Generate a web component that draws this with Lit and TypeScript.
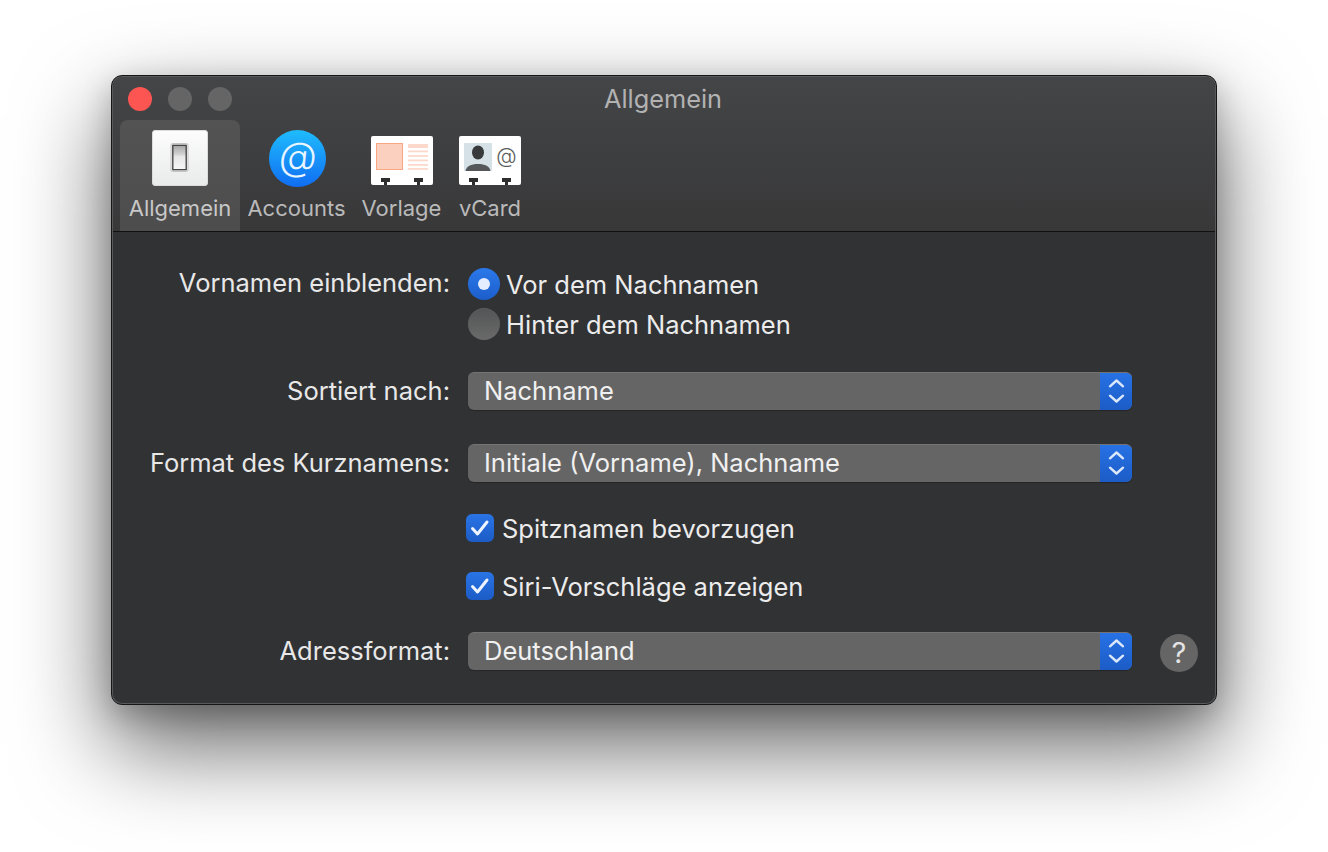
import { LitElement, html, css, svg } from "lit";
import { customElement } from "lit/decorators.js";

const chevrons = html`<svg class="chev" width="32" height="38" viewBox="0 0 32 38" fill="none" stroke="#dbe7fb" stroke-width="2.4" stroke-linecap="round" stroke-linejoin="round"><path d="M10 14.300 16.500 8.500 23 14.300"/><path d="M10 23.700 16.500 29.500 23 23.700"/></svg>`;

const pegs = svg`<path d="M10 42h9v4h-3v3h-3v-3h-3z M43 42h9v4h-3v3h-3v-3h-3z" fill="#2e2e2e"/>`;

const switchIcon = html`<svg width="56" height="56" viewBox="0 0 56 56">
  <defs>
    <linearGradient id="plate" x1="0" y1="0" x2="0" y2="1"><stop offset="0" stop-color="#fdfdfe"/><stop offset="1" stop-color="#e9eaea"/></linearGradient>
    <linearGradient id="rock" x1="0" y1="0" x2="0" y2="1"><stop offset="0" stop-color="#a5a5a5"/><stop offset=".4" stop-color="#d6d6d6"/><stop offset=".44" stop-color="#e6e6e6"/><stop offset="1" stop-color="#f7f7f7"/></linearGradient>
  </defs>
  <rect x=".5" y=".5" width="55" height="55" rx="2.500" fill="url(#plate)" stroke="#dcdcdc"/>
  <rect x="19" y="13.500" width="17" height="28" rx="1.500" fill="#f5f5f5" stroke="#c4c4c4"/>
  <rect x="20.800" y="15.300" width="13.400" height="24.400" fill="url(#rock)" stroke="#3d3d3d" stroke-width="1.300"/>
</svg>`;

const atIcon = html`<svg class="at-svg" width="57" height="57" viewBox="0 0 57 57">
  <defs><linearGradient id="blue" x1="0" y1="0" x2="0" y2="1"><stop offset="0" stop-color="#1fbcfd"/><stop offset="1" stop-color="#106df2"/></linearGradient></defs>
  <circle cx="28.500" cy="28.500" r="28.500" fill="url(#blue)"/>
  <text x="32" y="40" text-anchor="middle" transform="skewX(-6)" class="at-big">@</text>
</svg>`;

const templateIcon = html`<svg width="62" height="49" viewBox="0 0 62 49">
  <rect width="62" height="49" rx="2" fill="#fff"/>
  <rect x="5.500" y="7.500" width="26" height="26" fill="#fcd0bf" stroke="#f9a683"/>
  <g fill="#fdd9cb"><rect x="37" y="8" width="20" height="4"/><rect x="37" y="14.500" width="20" height="1.800"/><rect x="37" y="19" width="20" height="1.800"/><rect x="37" y="23.500" width="20" height="1.800"/><rect x="37" y="28" width="20" height="1.800"/><rect x="37" y="32" width="20" height="1.800"/></g>
  ${pegs}
</svg>`;

const vcardIcon = html`<svg width="62" height="49" viewBox="0 0 62 49">
  <rect width="62" height="49" rx="2" fill="#fff"/>
  <rect x="5" y="7" width="28" height="28" rx="1" fill="#d5e1e6"/>
  <ellipse cx="19" cy="16.500" rx="6" ry="7" fill="#37393b"/>
  <path d="M6.500 35c.6-4.500 5.500-7 12.500-7s11.900 2.500 12.500 7z" fill="#54585b"/>
  <text x="47.500" y="27" text-anchor="middle" class="at-small">@</text>
  ${pegs}
</svg>`;

@customElement("app-root")
export class AppRoot extends LitElement {
  static styles = css`
    :host {
      display: block;
      width: 1328px;
      height: 852px;
      background: #fff;
      overflow: hidden;
      font-family: Inter, "Liberation Sans", sans-serif;
    }
    .page { padding: 75px 111px 0; }
    .window {
      box-sizing: border-box;
      width: 1106px;
      height: 630px;
      padding: 1px;
      border: 1px solid #161616;
      border-radius: 11px;
      background: #59595b;
      box-shadow: 0 40px 92px 2px rgba(0, 0, 0, 0.6), 0 10px 30px rgba(0, 0, 0, 0.22);
    }
    .inner {
      height: 100%;
      display: flex;
      flex-direction: column;
      border-radius: 9px;
      overflow: hidden;
      background: #313234;
    }
    .chrome {
      background: linear-gradient(#444547, #383839);
      border-bottom: 1px solid #101010;
      height: 154px;
      flex: none;
    }
    .titlebar {
      height: 43px;
      display: grid;
      grid-template-columns: 1fr auto 1fr;
      align-items: center;
      padding-right: 2px;
    }
    .lights { display: flex; gap: 16px; padding-left: 15px; }
    .light { width: 24px; height: 24px; border-radius: 50%; background: #656565; }
    .light.close { background: #fd5552; }
    .title { color: #b2b2b2; font-size: 25.3px; }
    .tools { display: flex; padding-left: 7px; }
    .tool {
      height: 111px;
      box-sizing: border-box;
      display: flex;
      flex-direction: column;
      align-items: center;
      color: #bababa;
      font-size: 22px;
    }
    .tool.a { width: 120px; background: linear-gradient(#535353, #4d4d4d); border-radius: 8px 8px 0 0; color: #c8c8c8; }
    .tool.b { width: 113px; }
    .tool.c { width: 97px; }
    .tool.d { width: 80px; }
    .ic { height: 66px; margin-top: 10px; display: flex; align-items: flex-start; justify-content: center; }
    .ic.card { padding-top: 6px; height: 60px; }
    .ic svg { display: block; }
    .ic svg.at-svg { margin-left: 1px; }
    .tool .lbl { line-height: 26px; margin-top: -1px; white-space: nowrap; }
    .at-big { font: 300 39px Inter, sans-serif; fill: #e9f5ff; }
    .at-small { font: 300 21px Inter, sans-serif; fill: #5c5c5c; }

    .form { padding-top: 36px; color: #ececec; font-size: 25.5px; }
    .row { display: flex; align-items: flex-start; }
    .row + .row { margin-top: 32px; }
    .row.g34 { margin-top: 34px !important; }
    .row.g30 { margin-top: 30px !important; }
    .label { width: 337px; flex: none; text-align: right; line-height: 30px; color: #e8e8e8; white-space: nowrap; }
    .label.sel { line-height: 38px; }
    .ctrl { margin-left: 18px; }
    .radios { display: flex; flex-direction: column; gap: 8px; }
    .opt { display: flex; align-items: center; gap: 6px; height: 32px; white-space: nowrap; }
    .opt .txt { padding-top: 1px; }
    .radio { box-sizing: border-box; width: 32px; height: 32px; border-radius: 50%; background: linear-gradient(#545556, #6a6a6a); border-top: 1px solid #5e5e5e; }
    .radio.on { background: linear-gradient(#2b79ea, #1c5ecb); display: flex; align-items: center; justify-content: center; border: none; }
    .radio.on::after { content: ""; width: 12px; height: 12px; border-radius: 50%; background: #e3edfd; }
    .select {
      width: 664px;
      height: 38px;
      box-sizing: border-box;
      display: flex;
      border-radius: 6px;
      overflow: hidden;
      background: #656565;
      border-top: 1px solid #737373;
      box-shadow: 0 1px 1px rgba(0, 0, 0, 0.25);
      line-height: 36px;
    }
    .select .val { flex: 1; padding-left: 16px; color: #f0f0f0; }
    .stepper { width: 32px; margin-top: -1px; height: 38px; background: linear-gradient(#2772e6, #1c5cc6); }
    .chev { display: block; }
    .check { display: flex; align-items: center; gap: 8px; margin-left: 16px; height: 28px; white-space: nowrap; }
    .box { width: 28px; height: 28px; border-radius: 6px; background: linear-gradient(#2a74e6, #1c5cc6); display: block; }
    .help {
      margin-left: 28px;
      margin-top: 2px;
      width: 38px;
      height: 38px;
      border-radius: 50%;
      background: #656565;
      color: #e3e3e3;
      font-size: 29px;
      font-weight: 400;
      line-height: 38px;
      text-align: center;
      flex: none;
    }
  `;

  private select(v: string) {
    return html`<div class="select"><span class="val">${v}</span><span class="stepper">${chevrons}</span></div>`;
  }

  private check(t: string) {
    return html`<div class="check">
      <svg class="box" viewBox="0 0 28 28" fill="none"><path d="M6.500 14.500 11.500 20 21 8" stroke="#eef4ff" stroke-width="3" stroke-linecap="round" stroke-linejoin="round"/></svg>
      <span>${t}</span>
    </div>`;
  }

  render() {
    return html`<div class="page">
      <div class="window"><div class="inner">
        <div class="chrome">
          <div class="titlebar">
            <div class="lights"><span class="light close"></span><span class="light"></span><span class="light"></span></div>
            <div class="title">Allgemein</div>
            <div></div>
          </div>
          <div class="tools">
            <div class="tool a"><div class="ic">${switchIcon}</div><div class="lbl">Allgemein</div></div>
            <div class="tool b"><div class="ic">${atIcon}</div><div class="lbl">Accounts</div></div>
            <div class="tool c"><div class="ic card">${templateIcon}</div><div class="lbl">Vorlage</div></div>
            <div class="tool d"><div class="ic card">${vcardIcon}</div><div class="lbl">vCard</div></div>
          </div>
        </div>
        <div class="form">
          <div class="row">
            <div class="label">Vornamen einblenden:</div>
            <div class="ctrl radios">
              <div class="opt"><span class="radio on"></span><span class="txt">Vor dem Nachnamen</span></div>
              <div class="opt"><span class="radio"></span><span class="txt">Hinter dem Nachnamen</span></div>
            </div>
          </div>
          <div class="row">
            <div class="label sel">Sortiert nach:</div>
            <div class="ctrl">${this.select("Nachname")}</div>
          </div>
          <div class="row g34">
            <div class="label sel">Format des Kurznamens:</div>
            <div class="ctrl">${this.select("Initiale (Vorname), Nachname")}</div>
          </div>
          <div class="row"><div class="label"></div>${this.check("Spitznamen bevorzugen")}</div>
          <div class="row g30"><div class="label"></div>${this.check("Siri-Vorschläge anzeigen")}</div>
          <div class="row">
            <div class="label sel">Adressformat:</div>
            <div class="ctrl">${this.select("Deutschland")}</div>
            <div class="help">?</div>
          </div>
        </div>
      </div></div>
    </div>`;
  }
}
